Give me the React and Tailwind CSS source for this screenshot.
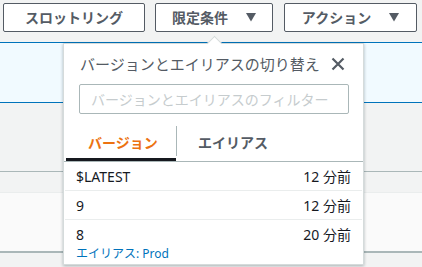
import React from "react";

function Caret() {
  return (
    <svg width="10" height="9" viewBox="0 0 10 9" className="ml-[18px]">
      <path d="M0 0 H10 L5 8.5 Z" fill="#545b64" />
    </svg>
  );
}

export default function App() {
  return (
    <div
      className="relative w-[422px] h-[267px] overflow-hidden bg-[#f2f3f3]"
      style={{ fontFamily: '"Noto Sans", "Noto Sans CJK JP", sans-serif' }}
    >
      {/* toolbar */}
      <div className="h-[42px] flex pt-[3px] pl-[3px]">
        <button className="w-[142px] h-[29px] border border-[#545b64] rounded-[2px] bg-white text-[#545b64] text-[14px] font-bold flex items-center justify-center">
          スロットリング
        </button>
        <button className="ml-[10px] w-[118px] h-[29px] border border-[#545b64] rounded-[2px] bg-white text-[#545b64] text-[14px] font-bold flex items-center justify-center">
          限定条件
          <Caret />
        </button>
        <button className="ml-[11px] w-[133px] h-[29px] border border-[#545b64] rounded-[2px] bg-white text-[#545b64] text-[14px] font-bold flex items-center justify-center">
          アクション
          <Caret />
        </button>
      </div>
      {/* blue band */}
      <div className="h-[61px] bg-[#f1faff] border-t border-b border-[#0073bb]" />
      <div className="h-[69px] border-b border-[#aab7b8]" />
      <div className="h-[21px] border-b border-[#eaeded]" />
      <div className="h-[60px] bg-[#fafafa] border-b-2 border-[#aab7b8]" />

      {/* popover */}
      <div className="absolute left-[63px] top-[43px] w-[301px] h-[222px] bg-white border border-[#d5dbdb] shadow-[0_1px_3px_rgba(0,28,36,0.3)]">
        <div className="absolute left-[145px] top-[-6px] w-[11px] h-[11px] bg-white border-l border-t border-[#d5dbdb] rotate-45" />
        <div className="relative flex items-center justify-between pl-[16px] pr-[18px] pt-[10px] h-[30px]">
          <span className="text-[15px] text-[#545b64] leading-[20px]">バージョンとエイリアスの切り替え</span>
          <svg width="14" height="14" viewBox="0 0 14 14">
            <path d="M1.5 1.5 L12.5 12.5 M12.5 1.5 L1.5 12.5" stroke="#545b64" strokeWidth="2.2" />
          </svg>
        </div>
        <div className="mt-[10px] ml-[15px] w-[270px] h-[30px] border border-[#aab7b8] rounded-[2px] flex items-center pl-[11px] text-[14px] text-[#c6ccce]">
          バージョンとエイリアスのフィルター
        </div>
        <div className="mt-[12px] flex h-[36px] border-b border-[#aab7b8]">
          <div className="ml-[2px] w-[110px] flex flex-col">
            <div className="flex-1 flex items-center pl-[22px] text-[14px] font-bold text-[#ec7211]">バージョン</div>
            <div className="h-[3px] bg-[#16191f]" />
          </div>
          <div className="w-px h-[30px] bg-[#aab7b8]" />
          <div className="flex items-center pl-[21px] text-[14px] font-bold text-[#545b64] pb-[3px]">エイリアス</div>
        </div>
        <div className="px-[1px]">
          <div className="h-[29px] flex items-center justify-between pl-[11px] pr-[11px] border-b border-[#eaeded] text-[14px] text-[#16191f]">
            <span>$LATEST</span>
            <span>12 分前</span>
          </div>
          <div className="h-[29px] flex items-center justify-between pl-[11px] pr-[11px] border-b border-[#eaeded] text-[14px] text-[#16191f]">
            <span>9</span>
            <span>12 分前</span>
          </div>
          <div className="pt-[5px] pl-[11px] pr-[11px] text-[14px] text-[#16191f]">
            <div className="flex justify-between leading-[20px]">
              <span>8</span>
              <span>20 分前</span>
            </div>
            <div className="text-[12px] text-[#0073bb] leading-[16px] mt-[1px]">エイリアス: Prod</div>
          </div>
        </div>
      </div>
    </div>
  );
}
